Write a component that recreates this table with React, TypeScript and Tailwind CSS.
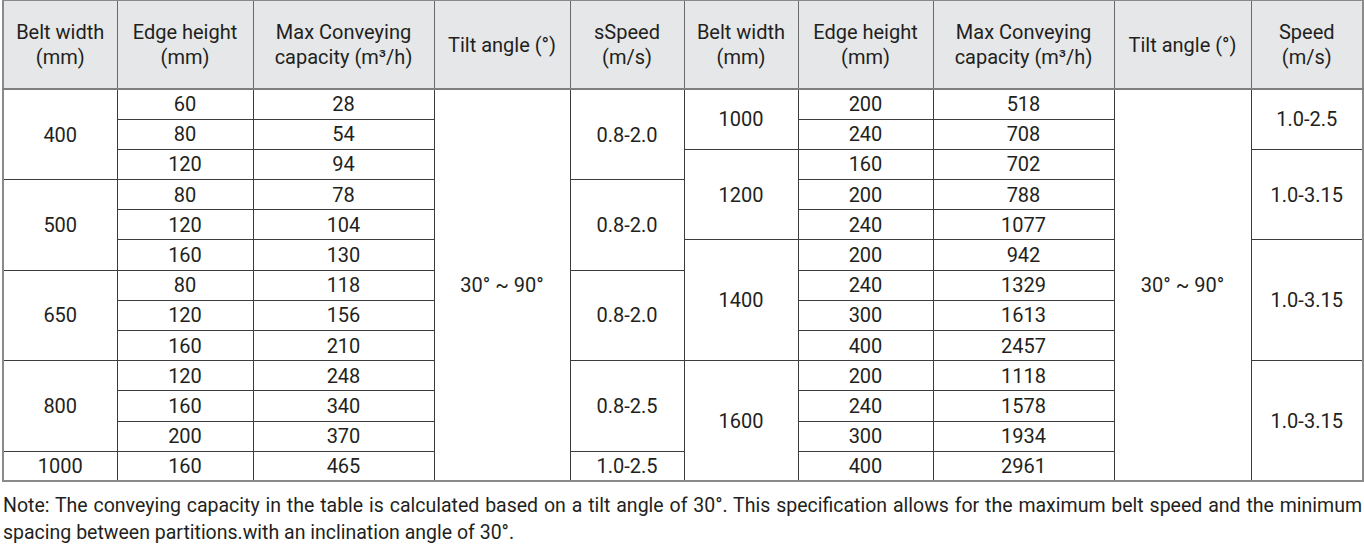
const widths = [114, 136, 181, 136, 114, 114, 135, 181, 137, 112];

type Cell = { text: string; span?: number };

// each row: list of cells actually rendered (rowspans handled by skipping)
const rows: Cell[][] = [
  [{ text: "400", span: 3 }, { text: "60" }, { text: "28" }, { text: "30° ~ 90°", span: 13 }, { text: "0.8-2.0", span: 3 }, { text: "1000", span: 2 }, { text: "200" }, { text: "518" }, { text: "30° ~ 90°", span: 13 }, { text: "1.0-2.5", span: 2 }],
  [{ text: "80" }, { text: "54" }, { text: "240" }, { text: "708" }],
  [{ text: "120" }, { text: "94" }, { text: "1200", span: 3 }, { text: "160" }, { text: "702" }, { text: "1.0-3.15", span: 3 }],
  [{ text: "500", span: 3 }, { text: "80" }, { text: "78" }, { text: "0.8-2.0", span: 3 }, { text: "200" }, { text: "788" }],
  [{ text: "120" }, { text: "104" }, { text: "240" }, { text: "1077" }],
  [{ text: "160" }, { text: "130" }, { text: "1400", span: 4 }, { text: "200" }, { text: "942" }, { text: "1.0-3.15", span: 4 }],
  [{ text: "650", span: 3 }, { text: "80" }, { text: "118" }, { text: "0.8-2.0", span: 3 }, { text: "240" }, { text: "1329" }],
  [{ text: "120" }, { text: "156" }, { text: "300" }, { text: "1613" }],
  [{ text: "160" }, { text: "210" }, { text: "400" }, { text: "2457" }],
  [{ text: "800", span: 3 }, { text: "120" }, { text: "248" }, { text: "0.8-2.5", span: 3 }, { text: "1600", span: 4 }, { text: "200" }, { text: "1118" }, { text: "1.0-3.15", span: 4 }],
  [{ text: "160" }, { text: "340" }, { text: "240" }, { text: "1578" }],
  [{ text: "200" }, { text: "370" }, { text: "300" }, { text: "1934" }],
  [{ text: "1000" }, { text: "160" }, { text: "465" }, { text: "1.0-2.5" }, { text: "400" }, { text: "2961" }],
];

const headers: string[][] = [
  ["Belt width", "(mm)"],
  ["Edge height", "(mm)"],
  ["Max Conveying", "capacity (m³/h)"],
  ["Tilt angle (°)"],
  ["sSpeed", "(m/s)"],
  ["Belt width", "(mm)"],
  ["Edge height", "(mm)"],
  ["Max Conveying", "capacity (m³/h)"],
  ["Tilt angle (°)"],
  ["Speed", "(m/s)"],
];

export default function App() {
  return (
    <div
      className="w-[1364px] h-[555px] bg-white text-[#231f20] overflow-hidden"
      style={{ fontFamily: "Roboto, 'Noto Sans', sans-serif" }}
    >
      <div className="pl-[2px] pr-[2px]">
        <table className="table-fixed border-collapse w-[1360px] -mt-px border-2 border-[#8a8a8a]">
          <colgroup>
            {widths.map((w, i) => (
              <col key={i} style={{ width: w }} />
            ))}
          </colgroup>
          <thead>
            <tr className="h-[89px] bg-[#e6e7e9]">
              {headers.map((h, i) => (
                <th
                  key={i}
                  className="border border-[#6b6b6b] border-b-2 border-b-[#7f7f7f] font-normal text-[20px] leading-[25px] text-center align-middle pt-[1px]"
                >
                  {h.map((line, j) => (
                    <div key={j}>{line}</div>
                  ))}
                </th>
              ))}
            </tr>
          </thead>
          <tbody>
            {rows.map((r, i) => (
              <tr key={i} className="h-[30.2px]">
                {r.map((c, j) => (
                  <td
                    key={j}
                    rowSpan={c.span}
                    className="border border-[#3c3c3c] text-[20px] leading-[24px] text-center align-middle p-0"
                  >
                    {c.text}
                  </td>
                ))}
              </tr>
            ))}
          </tbody>
        </table>
        <p className="mt-[10px] text-[19.5px] leading-[27px] text-justify pl-[1px]">
          Note: The conveying capacity in the table is calculated based on a tilt angle of 30°. This
          specification allows for the maximum belt speed and the minimum spacing between
          partitions.with an inclination angle of 30°.
        </p>
      </div>
    </div>
  );
}
